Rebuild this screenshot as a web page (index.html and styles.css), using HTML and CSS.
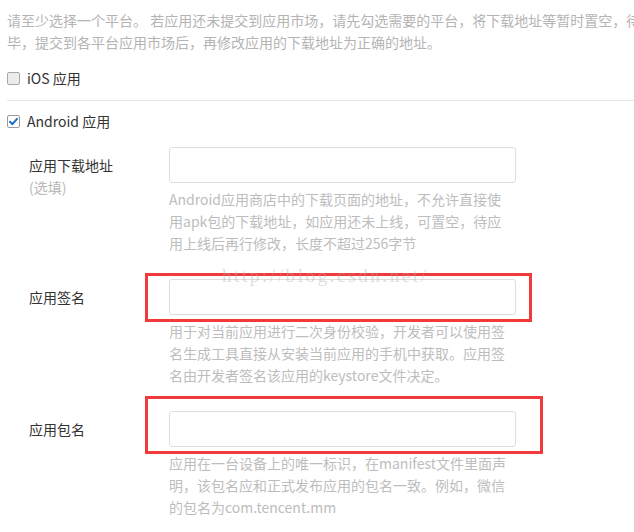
FILE: index.html
```html
<!DOCTYPE html>
<html lang="zh-CN">
<head>
<meta charset="utf-8">
<title>平台</title>
<link rel="stylesheet" href="styles.css">
</head>
<body>
<div class="page">
  <p class="intro">请至少选择一个平台。 若应用还未提交到应用市场，请先勾选需要的平台，将下载地址等暂时置空，待<br>毕，提交到各平台应用市场后，再修改应用的下载地址为正确的地址。</p>

  <div class="platform platform-ios">
    <span class="check"></span>
    <span class="platform-name">iOS 应用</span>
  </div>

  <div class="platform platform-android">
    <span class="check checked">
      <svg viewBox="0 0 13 13" width="13" height="13"><path d="M3 6.8 L5.4 9.2 L10 3.8" fill="none" stroke="#1f6fc5" stroke-width="2" stroke-linecap="round" stroke-linejoin="round"/></svg>
    </span>
    <span class="platform-name">Android 应用</span>
  </div>

  <div class="form">
    <div class="field">
      <div class="label">应用下载地址<span class="optional">(选填)</span></div>
      <div class="control">
        <div class="input"></div>
        <p class="help">Android应用商店中的下载页面的地址，不允许直接使<br>用apk包的下载地址，如应用还未上线，可置空，待应<br>用上线后再行修改，长度不超过256字节</p>
      </div>
    </div>

    <div class="field">
      <div class="label">应用签名</div>
      <div class="control">
        <div class="input"></div>
        <p class="help">用于对当前应用进行二次身份校验，开发者可以使用签<br>名生成工具直接从安装当前应用的手机中获取。应用签<br>名由开发者签名该应用的keystore文件决定。</p>
      </div>
      <div class="mark mark-sign"></div>
      <div class="watermark">http://blog.csdn.net/</div>
    </div>

    <div class="field">
      <div class="label">应用包名</div>
      <div class="control">
        <div class="input"></div>
        <p class="help">应用在一台设备上的唯一标识，在manifest文件里面声<br>明，该包名应和正式发布应用的包名一致。例如，微信<br>的包名为com.tencent.mm</p>
      </div>
      <div class="mark mark-package"></div>
    </div>
  </div>
</div>
</body>
</html>
```

FILE: styles.css
```css
html, body {
  margin: 0;
  padding: 0;
  background: #ffffff;
  overflow: hidden;
}

body {
  font-family: "Noto Sans CJK SC", "Noto Sans", sans-serif;
  font-size: 14px;
  line-height: 22px;
  color: #333333;
}

.page {
  padding: 9px 0 0 7px;
  width: 660px;
}

.intro {
  margin: 0;
  color: #b4b4b4;
  white-space: nowrap;
}

.platform {
  display: flex;
  align-items: center;
  height: 22px;
}

.platform-ios {
  margin-top: 14px;
  padding-bottom: 11px;
  border-bottom: 1px solid #e6e6e6;
}

.platform-android {
  margin-top: 9px;
}

.check {
  width: 13px;
  height: 13px;
  box-sizing: border-box;
  border: 1px solid #a8a8a8;
  border-radius: 2px;
  background: #ececec;
  display: flex;
  align-items: center;
  justify-content: center;
}

.check.checked {
  background: #ffffff;
  border-color: #9a9a9a;
}

.check svg {
  display: block;
  flex: none;
}

.platform-name {
  margin-left: 7px;
  color: #333333;
}

.form {
  margin-top: 15px;
}

.field {
  position: relative;
  display: flex;
  margin-bottom: 25px;
}

.label {
  width: 162px;
  flex: none;
  box-sizing: border-box;
  padding: 7px 0 0 22px;
  color: #333333;
}

.optional {
  display: block;
  color: #b8b8b8;
}

.control {
  width: 347px;
  flex: none;
}

.input {
  height: 36px;
  box-sizing: border-box;
  border: 1px solid #dedede;
  border-radius: 3px;
  background: #ffffff;
}

.help {
  margin: 5px 0 0;
  color: #bdbdbd;
  white-space: nowrap;
}

.mark {
  position: absolute;
  left: 138px;
  box-sizing: border-box;
  border: 3px solid #f23a3a;
}

.mark-sign {
  top: -6px;
  width: 387px;
  height: 49px;
}

.mark-package {
  top: -15px;
  width: 398px;
  height: 58px;
}

.watermark {
  position: absolute;
  left: 215px;
  top: -14px;
  font-family: "Liberation Serif", serif;
  font-size: 19px;
  letter-spacing: 2.6px;
  line-height: 22px;
  color: rgba(170, 170, 170, 0.4);
  white-space: nowrap;
}
```
